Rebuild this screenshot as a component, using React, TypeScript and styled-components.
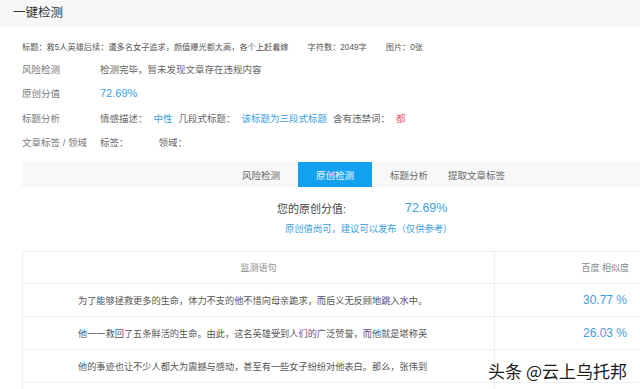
import React from "react";
import styled, { createGlobalStyle } from "styled-components";

const BLUE = "#3a9fe0";
const TEXT = "#666";

const GlobalStyle = createGlobalStyle`
  body {
    margin: 0;
    background: #fff;
    font-family: "Liberation Sans", "Noto Sans CJK SC", sans-serif;
  }
`;

const infoRows = [
  { label: "风险检测", key: "risk" },
  { label: "原创分值", key: "score" },
  { label: "标题分析", key: "title" },
  { label: "文章标签 / 领域", key: "tags" },
];

const tabs = ["风险检测", "原创检测", "标题分析", "提取文章标签"];

const sentences = [
  { text: "为了能够拯救更多的生命，体力不支的他不惜向母亲跪求，而后义无反顾地跳入水中。", rate: "30.77 %" },
  { text: "他一一救回了五条鲜活的生命。由此，这名英雄受到人们的广泛赞誉，而他就是堪称英", rate: "26.03 %" },
  { text: "他的事迹也让不少人都大为震撼与感动，甚至有一些女子纷纷对他表白。那么，张伟到", rate: "" },
  { text: "", rate: "" },
];

const App: React.FC = () => {
  const renderValue = (key: string) => {
    switch (key) {
      case "risk":
        return <Plain>检测完毕，暂未发现文章存在违规内容</Plain>;
      case "score":
        return <ScoreSmall>72.69%</ScoreSmall>;
      case "title":
        return (
          <>
            <Plain>情感描述：</Plain>
            <Accent>中性</Accent>
            <Plain>几段式标题：</Plain>
            <Accent>该标题为三段式标题</Accent>
            <Plain>含有违禁词：</Plain>
            <Danger>都</Danger>
          </>
        );
      default:
        return (
          <>
            <Plain>标签：</Plain>
            <Plain $wide>领域：</Plain>
          </>
        );
    }
  };

  return (
    <Page>
      <GlobalStyle />
      <HeaderBar>一键检测</HeaderBar>
      <Info>
        <TitleRow>
          <TitleText>标题：救5人英雄后续：遭多名女子追求，颜值曝光都太高，各个上赶着嫁</TitleText>
          <TitleText>字符数：2049字</TitleText>
          <TitleText>图片：0张</TitleText>
        </TitleRow>
        {infoRows.map((row) => (
          <InfoRow key={row.key}>
            <Label>{row.label}</Label>
            <Values>{renderValue(row.key)}</Values>
          </InfoRow>
        ))}
      </Info>

      <TabBar>
        {tabs.map((tab, i) => (
          <Tab key={tab} $active={i === 1}>
            {tab}
          </Tab>
        ))}
      </TabBar>

      <ScoreRow>
        <ScoreLabel>您的原创分值:</ScoreLabel>
        <ScoreBig>72.69%</ScoreBig>
      </ScoreRow>
      <Advice>原创值尚可，建议可以发布（仅供参考）</Advice>

      <Table>
        <thead>
          <tr>
            <HeadCell $center>监测语句</HeadCell>
            <HeadCell>百度 相似度</HeadCell>
          </tr>
        </thead>
        <tbody>
          {sentences.map((s, i) => (
            <tr key={i}>
              <SentenceCell>{s.text}</SentenceCell>
              <RateCell>{s.rate}</RateCell>
            </tr>
          ))}
        </tbody>
      </Table>

      <Watermark>头条 @云上乌托邦</Watermark>
    </Page>
  );
};

const Page = styled.div`
  position: relative;
  width: 640px;
  height: 389px;
  overflow: hidden;
  background: #fff;
`;

const HeaderBar = styled.div`
  height: 27px;
  line-height: 26px;
  padding-left: 13px;
  background: #f7f7f7;
  color: #333;
  font-size: 12.5px;
`;

const Info = styled.div`
  padding: 8px 0 0 22px;
`;

const TitleRow = styled.div`
  display: flex;
  align-items: center;
  column-gap: 19px;
  height: 22px;
`;

const TitleText = styled.span`
  font-size: 8.2px;
  color: #555;
`;

const InfoRow = styled.div`
  display: flex;
  align-items: center;
  height: 24.3px;
`;

const Label = styled.div`
  width: 78px;
  font-size: 9.5px;
  color: #777;
`;

const Values = styled.div`
  display: flex;
  align-items: center;
  column-gap: 6px;
`;

const Plain = styled.span<{ $wide?: boolean }>`
  font-size: 9.5px;
  color: ${TEXT};
  margin-left: ${(p) => (p.$wide ? "24px" : "0")};
`;

const Accent = styled.span`
  font-size: 9.5px;
  color: ${BLUE};
`;

const Danger = styled.span`
  font-size: 9.5px;
  color: #f0607a;
`;

const ScoreSmall = styled.span`
  font-size: 11px;
  color: ${BLUE};
`;

const TabBar = styled.div`
  display: flex;
  align-items: stretch;
  height: 25px;
  margin: 8px 0 0 22px;
  padding-left: 210px;
  background: #f8f8f8;
`;

const Tab = styled.div<{ $active?: boolean }>`
  display: flex;
  align-items: center;
  padding: 0 ${(p) => (p.$active ? "18px" : "10px")};
  margin: 0 ${(p) => (p.$active ? "8px" : "0")};
  font-size: 9.5px;
  color: ${(p) => (p.$active ? "#fff" : "#666")};
  background: ${(p) => (p.$active ? "#12a0f0" : "transparent")};
`;

const ScoreRow = styled.div`
  display: flex;
  align-items: center;
  height: 20px;
  margin: 11px 0 0 277px;
`;

const ScoreLabel = styled.span`
  width: 128px;
  font-size: 11px;
  color: #444;
`;

const ScoreBig = styled.span`
  font-size: 12.5px;
  color: ${BLUE};
`;

const Advice = styled.div`
  height: 18px;
  line-height: 18px;
  margin: 2px 0 0 285px;
  font-size: 9.3px;
  color: ${BLUE};
`;

const Table = styled.table`
  margin: 13px 0 0 22px;
  width: 640px;
  border-collapse: collapse;
  table-layout: fixed;

  td,
  th {
    border: 1px solid #eee;
  }
`;

const HeadCell = styled.th<{ $center?: boolean }>`
  height: 31px;
  padding: 0 ${(p) => (p.$center ? "0" : "32px")} 0 0;
  font-size: 9px;
  font-weight: normal;
  color: #888;
  text-align: ${(p) => (p.$center ? "center" : "right")};
  width: ${(p) => (p.$center ? "471px" : "auto")};
`;

const SentenceCell = styled.td`
  height: 32px;
  padding: 0 0 0 55px;
  font-size: 9.2px;
  color: #555;
  white-space: nowrap;
  overflow: hidden;
`;

const RateCell = styled.td`
  padding-right: 34px;
  text-align: right;
  font-size: 12px;
  color: ${BLUE};
`;

const Watermark = styled.div`
  position: absolute;
  right: 13px;
  bottom: 10px;
  font-family: "Noto Sans CJK SC", sans-serif;
  font-size: 17px;
  line-height: 1;
  color: #1a1a1a;
  text-shadow: 0 0 2px #fff, 0 0 2px #fff, 0 0 3px #fff;
`;

export default App;
